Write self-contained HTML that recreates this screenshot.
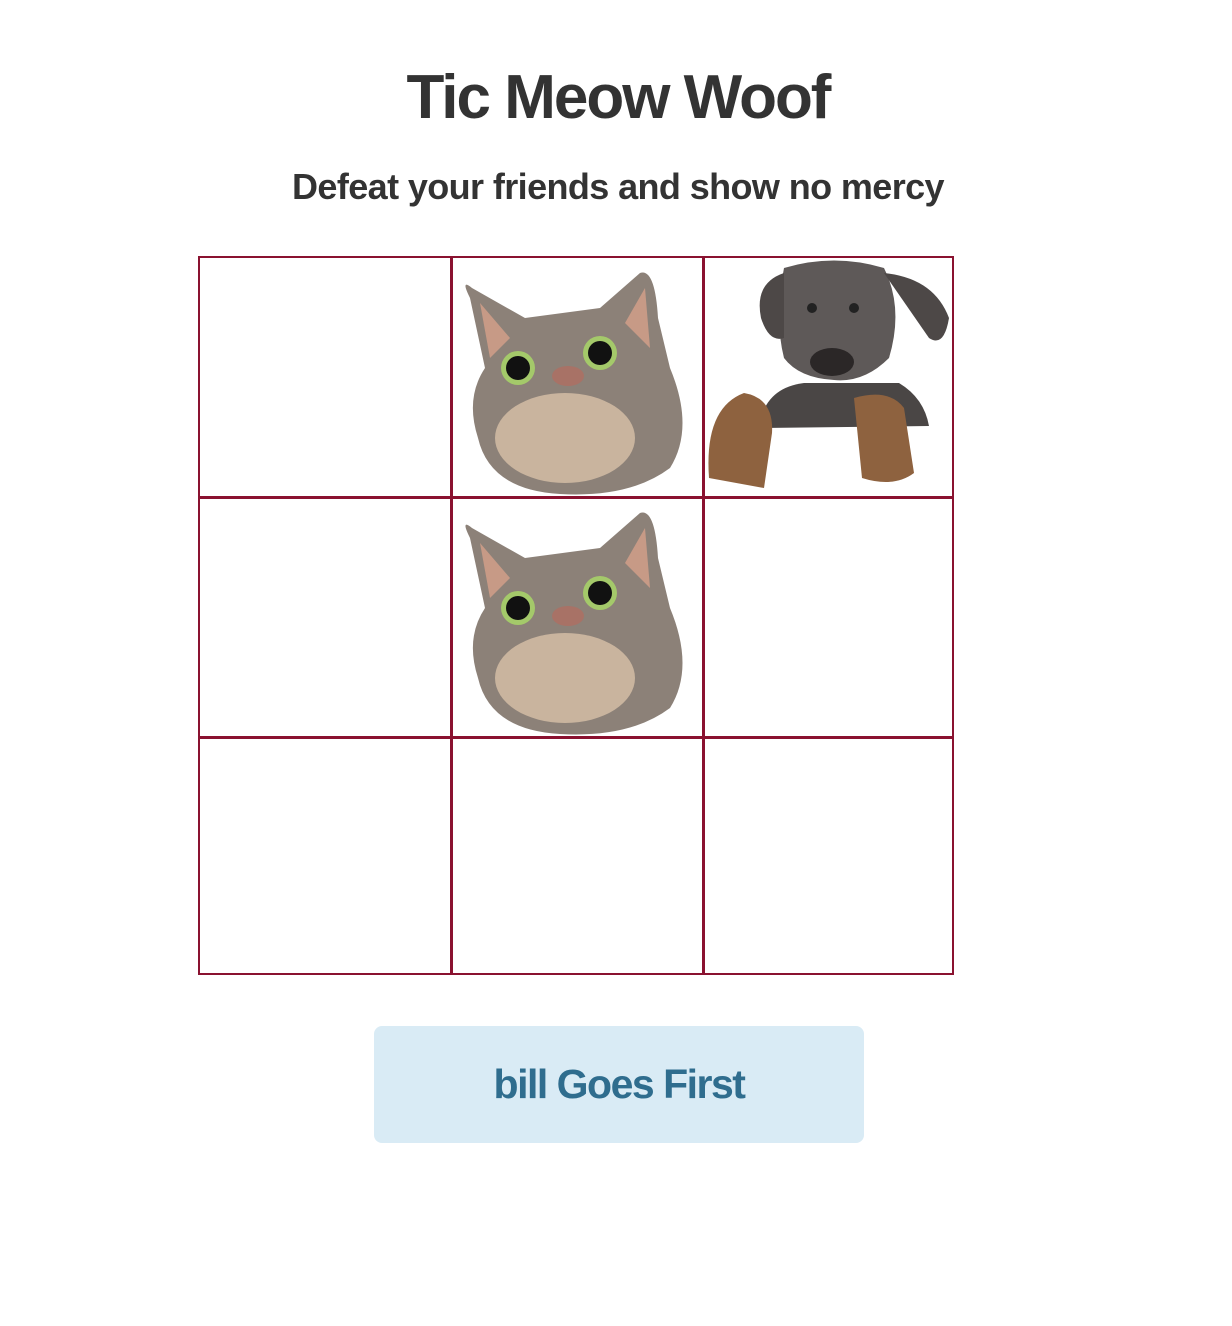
<!DOCTYPE html>
<html><head><meta charset="utf-8"><style>
body{margin:0;background:#fff;width:1232px;height:1326px;position:relative;font-family:"Liberation Sans",sans-serif;overflow:hidden}
h1{position:absolute;top:62px;left:0;width:1236px;text-align:center;margin:0;font-size:62px;font-weight:bold;color:#333;letter-spacing:-2px}
h2{position:absolute;top:166px;left:0;width:1236px;text-align:center;margin:0;font-size:36px;font-weight:bold;color:#333;letter-spacing:-0.6px}
.grid{position:absolute;left:198px;top:256px;width:752px;height:715px;border:2px solid #8a1230}
.v,.h{position:absolute;background:#8a1230}
.v{width:3px;top:0;height:100%}
.h{height:3px;left:0;width:100%}
.btn{position:absolute;left:374px;top:1026px;width:490px;height:117px;background:#d9ebf5;border-radius:8px;text-align:center;line-height:117px;font-size:41px;font-weight:bold;color:#2f6d8e;letter-spacing:-1.5px}
svg{position:absolute}
</style></head><body>
<h1>Tic Meow Woof</h1>
<h2>Defeat your friends and show no mercy</h2>
<div class="grid">
<div class="v" style="left:250px"></div><div class="v" style="left:502px"></div>
<div class="h" style="top:238px"></div><div class="h" style="top:478px"></div>
</div>
<svg width="0" height="0"><defs>
<g id="cat">
<path d="M20 40 Q10 20 22 30 L75 60 L150 50 L190 15 Q205 10 208 60 L220 110 Q245 170 220 210 Q180 240 110 236 Q40 232 28 180 Q15 140 35 110 Z" fill="#8c8178"/>
<path d="M30 45 L60 80 L40 100 Z" fill="#c79a86"/>
<path d="M195 30 L200 90 L175 65 Z" fill="#c79a86"/>
<ellipse cx="115" cy="180" rx="70" ry="45" fill="#c9b49e"/>
<circle cx="68" cy="110" r="17" fill="#a4c96a"/><circle cx="68" cy="110" r="12" fill="#111"/>
<circle cx="150" cy="95" r="17" fill="#a4c96a"/><circle cx="150" cy="95" r="12" fill="#111"/>
<ellipse cx="118" cy="118" rx="16" ry="10" fill="#a87266"/>
</g></defs></svg>
<svg style="left:450px;top:258px" width="252" height="238"><use href="#cat"/></svg>
<svg style="left:450px;top:498px" width="252" height="238"><use href="#cat"/></svg>
<svg style="left:704px;top:258px" width="248" height="238">
<path d="M55 170 Q60 130 100 125 L195 125 Q220 140 225 168 Z" fill="#4a4645"/>
<path d="M80 10 Q130 -5 180 10 Q200 50 185 100 Q160 125 130 122 Q95 120 80 100 Q70 60 80 10Z" fill="#5e5958"/>
<path d="M80 15 Q50 25 57 60 Q65 85 80 80 Z" fill="#4d4847"/>
<path d="M180 15 Q230 20 245 60 Q240 90 225 80 Z" fill="#4d4847"/>
<ellipse cx="128" cy="104" rx="22" ry="14" fill="#2b2727"/>
<circle cx="108" cy="50" r="5" fill="#222"/><circle cx="150" cy="50" r="5" fill="#222"/>
<path d="M5 220 Q0 150 40 135 Q70 140 68 175 L60 230 Z" fill="#8e623f"/>
<path d="M150 140 Q185 130 200 150 L210 215 Q190 230 158 220 Z" fill="#8e623f"/>
</svg>
<div class="btn">bill Goes First</div>
</body></html>
